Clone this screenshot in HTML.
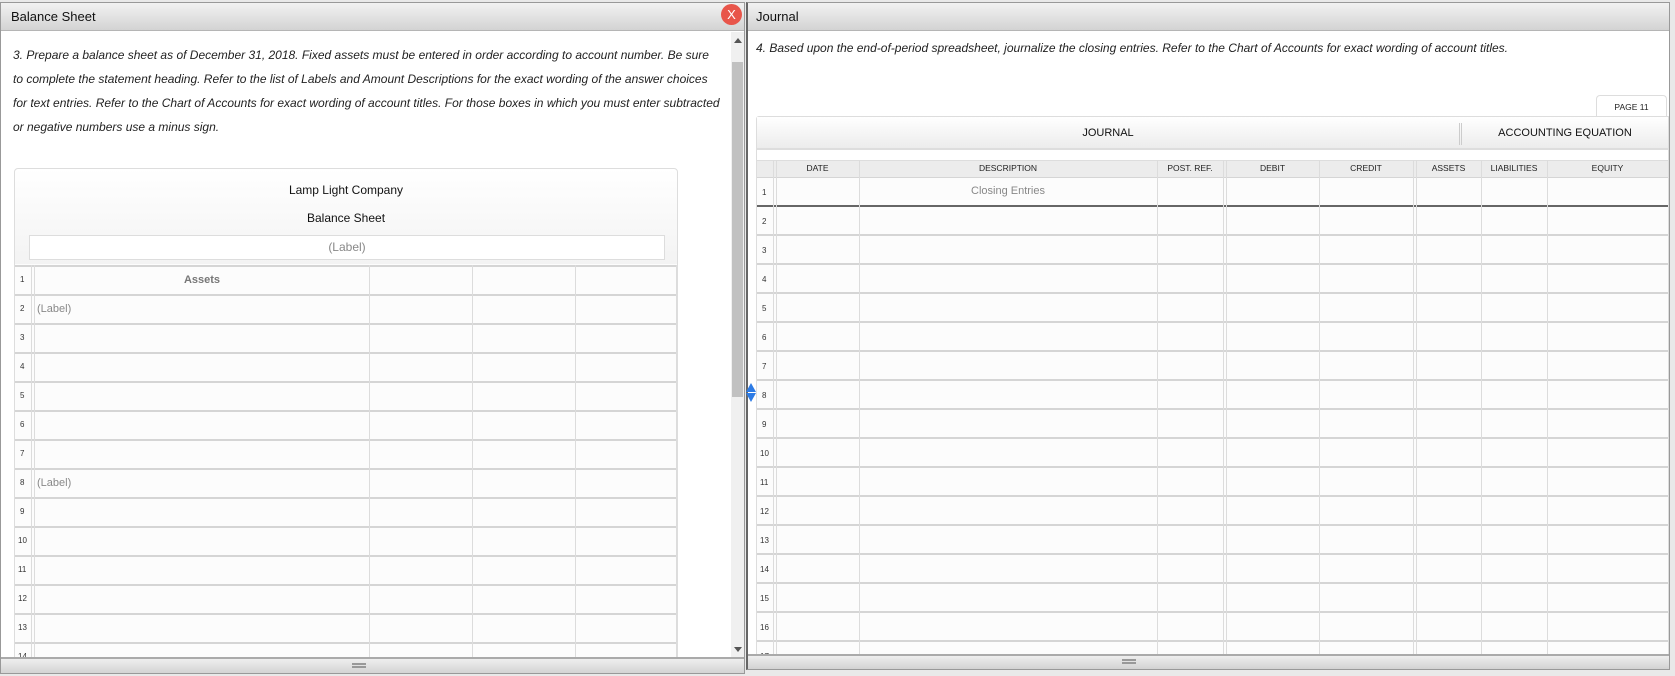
<!DOCTYPE html>
<html><head><meta charset="utf-8"><style>
*{box-sizing:border-box;margin:0;padding:0}
body{width:1675px;height:676px;background:#e9e9e9;position:relative;overflow:hidden;font-family:"Liberation Sans",Arial,sans-serif}
.a{position:absolute}
.tb{background:linear-gradient(#f2f2f2,#d3d3d3);border-bottom:1px solid #b5b5b5;font-size:13px;color:#111;line-height:27px;padding-left:10px}
.it{font-style:italic;font-size:12px;color:#222;white-space:nowrap}
.vl{position:absolute;top:0;bottom:0;width:1px;background:#dcdcdc}
.rn{position:absolute;font-size:8px;color:#333}
.hd{position:absolute;top:0;height:17px;line-height:17px;text-align:center;font-size:8.5px;color:#222}
.bot{background:linear-gradient(#eee,#d2d2d2);border-top:2px solid #aaa}
.grip{position:absolute;width:14px;height:5px;border-top:2px solid #999;border-bottom:2px solid #999}
</style></head><body>

<!-- LEFT PANEL -->
<div class="a" style="left:0;top:2px;width:745px;height:672px;background:#fff;border:1px solid #999;overflow:hidden">
  <div class="a tb" style="left:0;top:0;width:745px;height:28px">Balance Sheet</div>
  <div class="a it" style="left:12px;top:40px;line-height:24px">3. Prepare a balance sheet as of December 31, 2018. Fixed assets must be entered in order according to account number. Be sure<br>to complete the statement heading. Refer to the list of Labels and Amount Descriptions for the exact wording of the answer choices<br>for text entries. Refer to the Chart of Accounts for exact wording of account titles. For those boxes in which you must enter subtracted<br>or negative numbers use a minus sign.</div>
  <!-- scrollbar -->
  <div class="a" style="left:730px;top:29px;width:13px;height:626px;background:#f0f0f0"></div>
  <div class="a" style="left:731px;top:59px;width:11px;height:335px;background:#c1c1c1"></div>
  <div class="a" style="left:733px;top:35px;width:0;height:0;border-left:4px solid transparent;border-right:4px solid transparent;border-bottom:5px solid #555"></div>
  <div class="a" style="left:733px;top:644px;width:0;height:0;border-left:4px solid transparent;border-right:4px solid transparent;border-top:5px solid #555"></div>
  <!-- table box -->
  <div class="a" style="left:13px;top:165px;width:664px;height:500px;border:1px solid #ddd;border-radius:4px 4px 0 0;background:linear-gradient(#fff,#f3f3f3 95px,#fcfcfc 95px)">
    <div class="a" style="left:0;width:662px;top:14px;text-align:center;font-size:12px;color:#111">Lamp Light Company</div>
    <div class="a" style="left:0;width:662px;top:42px;text-align:center;font-size:12px;color:#111">Balance Sheet</div>
    <div class="a" style="left:14px;top:66px;width:636px;height:25px;border:1px solid #ddd;background:#fff;text-align:center;line-height:23px;font-size:12px;color:#888">(Label)</div>
    <div class="a" style="left:0;top:96px;width:662px;height:400px;background:repeating-linear-gradient(to bottom,#d5d5d5 0 2px,#fcfcfc 2px 29px)">
      <div class="vl" style="left:16px"></div><div class="vl" style="left:19px"></div>
      <div class="vl" style="left:354px"></div><div class="vl" style="left:457px"></div>
      <div class="vl" style="left:560px"></div><div class="vl" style="left:661px"></div>
      <div class="a" style="left:20px;width:334px;top:9px;text-align:center;font-size:11px;color:#777;font-weight:bold">Assets</div>
      <div class="a" style="left:22px;top:38px;font-size:11px;color:#888">(Label)</div>
      <div class="a" style="left:22px;top:212px;font-size:11px;color:#888">(Label)</div>
      <div class="rn" style="left:5px;top:10px">1</div><div class="rn" style="left:5px;top:39px">2</div>
      <div class="rn" style="left:5px;top:68px">3</div><div class="rn" style="left:5px;top:97px">4</div>
      <div class="rn" style="left:5px;top:126px">5</div><div class="rn" style="left:5px;top:155px">6</div>
      <div class="rn" style="left:5px;top:184px">7</div><div class="rn" style="left:5px;top:213px">8</div>
      <div class="rn" style="left:5px;top:242px">9</div><div class="rn" style="left:3px;top:271px">10</div>
      <div class="rn" style="left:3px;top:300px">11</div><div class="rn" style="left:3px;top:329px">12</div>
      <div class="rn" style="left:3px;top:358px">13</div><div class="rn" style="left:3px;top:387px">14</div>
    </div>
  </div>
  <div class="a bot" style="left:0;top:654px;width:745px;height:17px"><div class="grip" style="left:351px;top:4px"></div></div>
</div>
<!-- close button -->
<div class="a" style="left:721px;top:4px;width:21px;height:21px;border-radius:50%;background:#e8554a;color:#fff;font-size:13px;text-align:center;line-height:21px">X</div>

<!-- RIGHT PANEL -->
<div class="a" style="left:746px;top:2px;width:924px;height:668px;background:#fff;border:1px solid #999;border-left:2px solid #666;overflow:hidden">
  <div class="a tb" style="left:0;top:0;width:924px;height:28px;padding-left:8px">Journal</div>
  <div class="a it" style="left:8px;top:36px;line-height:18px">4. Based upon the end-of-period spreadsheet, journalize the closing entries. Refer to the Chart of Accounts for exact wording of account titles.</div>
  <!-- PAGE tab -->
  <div class="a" style="left:848px;top:92px;width:71px;height:22px;border:1px solid #ddd;border-bottom:none;border-radius:4px 4px 0 0;background:#fff;text-align:center;line-height:22px;font-size:8.5px;color:#222">PAGE 11</div>
  <div class="a" style="left:8px;top:113px;width:913px;height:560px;border:1px solid #ddd;border-radius:3px 0 0 0;background:#fcfcfc">
    <div class="a" style="left:0;top:0;width:911px;height:33px;background:linear-gradient(#fff,#ececec);border-bottom:2px solid #ddd"></div>
    <div class="a" style="left:0;width:702px;top:10px;text-align:center;font-size:11px;color:#111">JOURNAL</div>
    <div class="a" style="left:702px;top:6px;width:3px;height:22px;border-left:1px solid #ccc;border-right:1px solid #ccc"></div>
    <div class="a" style="left:705px;width:206px;top:10px;text-align:center;font-size:11px;color:#111">ACCOUNTING EQUATION</div>
    <div class="a" style="left:0;top:33px;width:911px;height:10px;background:#fff"></div>
    <!-- grid -->
    <div class="a" style="left:0;top:43px;width:911px;height:520px;background:linear-gradient(#ddd 0 1px,#ececec 1px 17px,#d5d5d5 17px 18px,transparent 18px)">
      <div class="a" style="left:0;top:47px;width:911px;height:480px;background:repeating-linear-gradient(to bottom,transparent 0 27px,#d5d5d5 27px 29px)"></div>
      <div class="a" style="left:0;top:45px;width:911px;height:2px;background:#666"></div>
      <div class="vl" style="left:16px"></div><div class="vl" style="left:19px"></div>
      <div class="vl" style="left:102px"></div><div class="vl" style="left:400px"></div>
      <div class="vl" style="left:466px"></div><div class="vl" style="left:469px"></div>
      <div class="vl" style="left:562px"></div><div class="vl" style="left:656px"></div><div class="vl" style="left:659px"></div>
      <div class="vl" style="left:724px"></div><div class="vl" style="left:790px"></div>
      <div class="hd" style="left:19px;width:83px">DATE</div>
      <div class="hd" style="left:102px;width:298px">DESCRIPTION</div>
      <div class="hd" style="left:400px;width:66px">POST. REF.</div>
      <div class="hd" style="left:469px;width:93px">DEBIT</div>
      <div class="hd" style="left:562px;width:94px">CREDIT</div>
      <div class="hd" style="left:659px;width:65px">ASSETS</div>
      <div class="hd" style="left:724px;width:66px">LIABILITIES</div>
      <div class="hd" style="left:790px;width:121px">EQUITY</div>
      <div class="a" style="left:102px;width:298px;top:25px;text-align:center;font-size:11px;color:#888">Closing Entries</div>
      <div class="rn" style="left:5px;top:28px">1</div><div class="rn" style="left:5px;top:57px">2</div>
      <div class="rn" style="left:5px;top:86px">3</div><div class="rn" style="left:5px;top:115px">4</div>
      <div class="rn" style="left:5px;top:144px">5</div><div class="rn" style="left:5px;top:173px">6</div>
      <div class="rn" style="left:5px;top:202px">7</div><div class="rn" style="left:5px;top:231px">8</div>
      <div class="rn" style="left:5px;top:260px">9</div><div class="rn" style="left:3px;top:289px">10</div>
      <div class="rn" style="left:3px;top:318px">11</div><div class="rn" style="left:3px;top:347px">12</div>
      <div class="rn" style="left:3px;top:376px">13</div><div class="rn" style="left:3px;top:405px">14</div>
      <div class="rn" style="left:3px;top:434px">15</div><div class="rn" style="left:3px;top:463px">16</div>
      <div class="rn" style="left:3px;top:492px">17</div>
    </div>
  </div>
  <div class="a bot" style="left:0;top:651px;width:924px;height:17px;border-bottom:2px solid #999"><div class="grip" style="left:374px;top:3px"></div></div>
</div>
<!-- spinner -->
<div class="a" style="left:746px;top:383px;width:0;height:0;border-left:5px solid transparent;border-right:5px solid transparent;border-bottom:9px solid #2d7be5"></div>
<div class="a" style="left:746px;top:393px;width:0;height:0;border-left:5px solid transparent;border-right:5px solid transparent;border-top:9px solid #2d7be5"></div>
</body></html>
